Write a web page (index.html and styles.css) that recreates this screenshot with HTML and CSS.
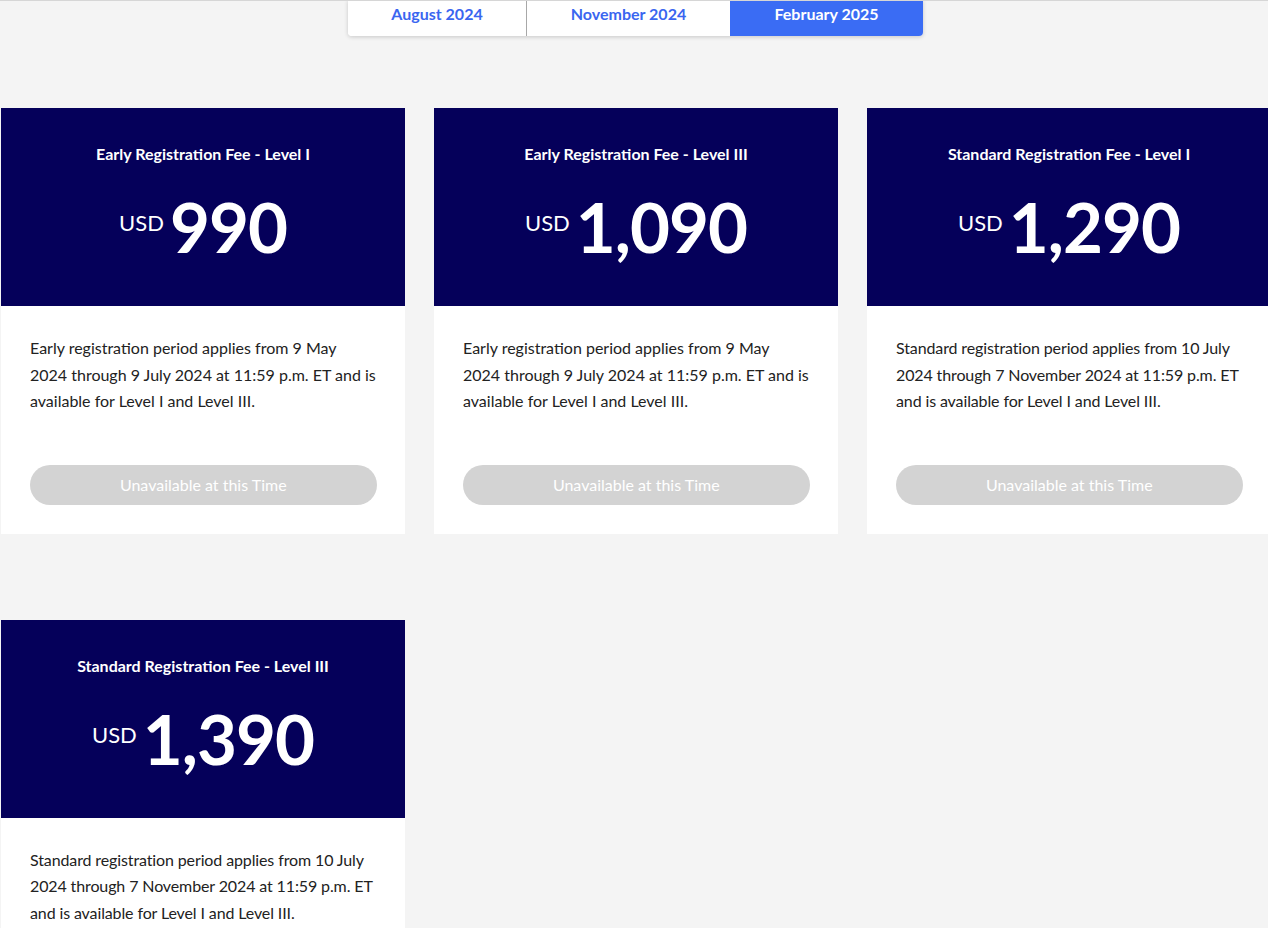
FILE: index.html
```html
<!DOCTYPE html>
<html lang="en">
<head>
  <meta charset="UTF-8" />
  <title>Registration Fees</title>
  <link rel="stylesheet" href="styles.css">
</head>
<body>
  <div class="tabs">
    <button class="tab">August 2024</button>
    <button class="tab">November 2024</button>
    <button class="tab active">February 2025</button>
  </div>

  <div class="fees">
    <div class="fee-card">
      <div class="fee-head">
        <h3>Early Registration Fee - Level I</h3>
        <p class="price"><span class="cur">USD</span><span class="amount">990</span></p>
      </div>
      <div class="fee-body">
        <p>Early registration period applies from 9 May 2024 through 9 July 2024 at 11:59 p.m. ET and is available for Level I and Level III.</p>
        <button class="btn" disabled>Unavailable at this Time</button>
      </div>
    </div>

    <div class="fee-card">
      <div class="fee-head">
        <h3>Early Registration Fee - Level III</h3>
        <p class="price"><span class="cur">USD</span><span class="amount">1,090</span></p>
      </div>
      <div class="fee-body">
        <p>Early registration period applies from 9 May 2024 through 9 July 2024 at 11:59 p.m. ET and is available for Level I and Level III.</p>
        <button class="btn" disabled>Unavailable at this Time</button>
      </div>
    </div>

    <div class="fee-card standard">
      <div class="fee-head">
        <h3>Standard Registration Fee - Level I</h3>
        <p class="price"><span class="cur">USD</span><span class="amount">1,290</span></p>
      </div>
      <div class="fee-body">
        <p>Standard registration period applies from 10 July 2024 through 7 November 2024 at 11:59 p.m. ET and is available for Level I and Level III.</p>
        <button class="btn" disabled>Unavailable at this Time</button>
      </div>
    </div>

    <div class="fee-card standard">
      <div class="fee-head">
        <h3>Standard Registration Fee - Level III</h3>
        <p class="price"><span class="cur">USD</span><span class="amount">1,390</span></p>
      </div>
      <div class="fee-body">
        <p>Standard registration period applies from 10 July 2024 through 7 November 2024 at 11:59 p.m. ET and is available for Level I and Level III.</p>
        <button class="btn" disabled>Unavailable at this Time</button>
      </div>
    </div>
  </div>
</body>
</html>
```

FILE: styles.css
```css
* {
  font-family: 'Lato', 'Liberation Sans', sans-serif;
  box-sizing: border-box;
}

body {
  margin: 0;
  background: #f4f4f4;
  border-top: 1px solid #d6d6d6;
  overflow-x: hidden;
}

.tabs {
  display: flex;
  width: 575px;
  margin: -1px 0 0 348px;
  background: #fff;
  border-radius: 0 0 4px 4px;
  box-shadow: 0 1px 4px rgba(0, 0, 0, 0.18);
}

.tab {
  height: 36px;
  border: none;
  border-left: 1px solid #a8a8a8;
  background: #fff;
  color: #3a66f0;
  font-size: 16px;
  font-weight: bold;
  padding: 0 0 9px;
  cursor: pointer;
}

.tab:nth-child(1) {
  width: 178px;
  border-left: none;
  border-radius: 0 0 0 4px;
}

.tab:nth-child(2) {
  width: 204px;
}

.tab:nth-child(3) {
  width: 193px;
}

.tab.active {
  background: #3a6cf4;
  color: #fff;
  border-left: none;
  border-radius: 0 0 4px 0;
}

.fees {
  display: grid;
  grid-template-columns: repeat(3, 404px);
  column-gap: 29px;
  row-gap: 86px;
  padding: 72px 0 0 1px;
}

.fee-card {
  background: #fff;
}

.fee-head {
  background: #05005a;
  color: #fff;
  height: 198px;
  text-align: center;
  padding-top: 36px;
}

.fee-head h3 {
  margin: 0;
  font-size: 16px;
  font-weight: bold;
  line-height: 20px;
}

.price {
  margin: 25px 0 0;
  display: flex;
  justify-content: center;
  align-items: flex-start;
}

.cur {
  font-size: 22px;
  margin-top: 20px;
  margin-right: 6px;
}

.amount {
  font-size: 69px;
  font-weight: bold;
  line-height: 76px;
  letter-spacing: -1px;
}

.fee-body {
  padding: 29px 28.5px 29px 29px;
}

.fee-body p {
  margin: 0 0 50px;
  font-size: 16px;
  line-height: 26.5px;
  color: #222;
}

.standard .fee-body p {
  letter-spacing: -0.12px;
}

.btn {
  width: 100%;
  height: 40px;
  border: none;
  border-radius: 20px;
  background: #d3d3d3;
  color: #fff;
  font-size: 16px;
}
```
